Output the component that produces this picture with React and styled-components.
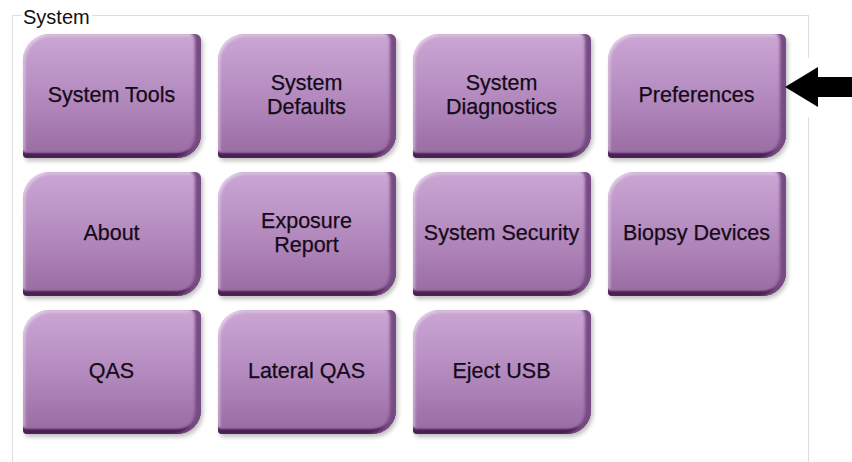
import React from 'react'
import styled, { createGlobalStyle } from 'styled-components'

const GlobalStyle = createGlobalStyle`
  html, body {
    margin: 0;
    padding: 0;
    background: #fff;
  }
  body {
    font-family: "Liberation Sans", Arial, sans-serif;
    overflow: hidden;
  }
`

const Page = styled.div`
  position: relative;
  width: 852px;
  height: 462px;
  overflow: hidden;
`

const Group = styled.fieldset`
  box-sizing: border-box;
  width: 797px;
  margin: 4px 0 0 12px;
  padding: 7px 0 60px 10px;
  border: 1px solid #dedede;
  border-bottom: none;
`

const Legend = styled.legend`
  margin-left: -2px;
  padding: 3px 2px 0;
  font-size: 20px;
  line-height: 20px;
  color: #111;
`

const Grid = styled.div`
  display: grid;
  grid-template-columns: repeat(4, 178px);
  grid-auto-rows: 124px;
  column-gap: 17px;
  row-gap: 14px;
`

const Tile = styled.button`
  display: flex;
  align-items: center;
  justify-content: center;
  width: 100%;
  height: 100%;
  padding: 0 1px 2px 0;
  border: none;
  border-radius: 26px 6px 24px 4px;
  background: linear-gradient(180deg, #cba6d4 0%, #bb93c6 35%, #a97eb4 70%, #986aa3 100%);
  box-shadow:
    inset -7px 0 3px -1px #774b83,
    inset 0 -6px 2px -1px #4a2052,
    inset 2px 2px 3px rgba(255, 255, 255, 0.45),
    2px 3px 4px rgba(0, 0, 0, 0.25);
  font-family: "Liberation Sans", Arial, sans-serif;
  font-size: 21.5px;
  line-height: 24.5px;
  color: #140a18;
  -webkit-text-stroke: 0.25px #140a18;
  text-align: center;
  white-space: nowrap;
  cursor: pointer;
`

const Pointer = styled.svg`
  position: absolute;
  left: 778px;
  top: 55px;
`

const tiles = [
  ['System Tools'],
  ['System', 'Defaults'],
  ['System', 'Diagnostics'],
  ['Preferences'],
  ['About'],
  ['Exposure', 'Report'],
  ['System Security'],
  ['Biopsy Devices'],
  ['QAS'],
  ['Lateral QAS'],
  ['Eject USB'],
]

const App = () => (
  <Page>
    <GlobalStyle />
    <Group>
      <Legend>System</Legend>
      <Grid>
        {tiles.map(lines => (
          <Tile key={lines.join(' ')}>
            <span>
              {lines.map((l, i) => (
                <React.Fragment key={l}>
                  {i > 0 && <br />}
                  {l}
                </React.Fragment>
              ))}
            </span>
          </Tile>
        ))}
      </Grid>
    </Group>
    <Pointer width="74" height="64" viewBox="778 55 74 64">
      <rect x="804" y="58" width="8" height="59" fill="#fff" />
      <polygon
        points="785,87 818,67 818,77 852,77 852,97 818,97 818,107"
        fill="#000"
      />
    </Pointer>
  </Page>
)

export default App
